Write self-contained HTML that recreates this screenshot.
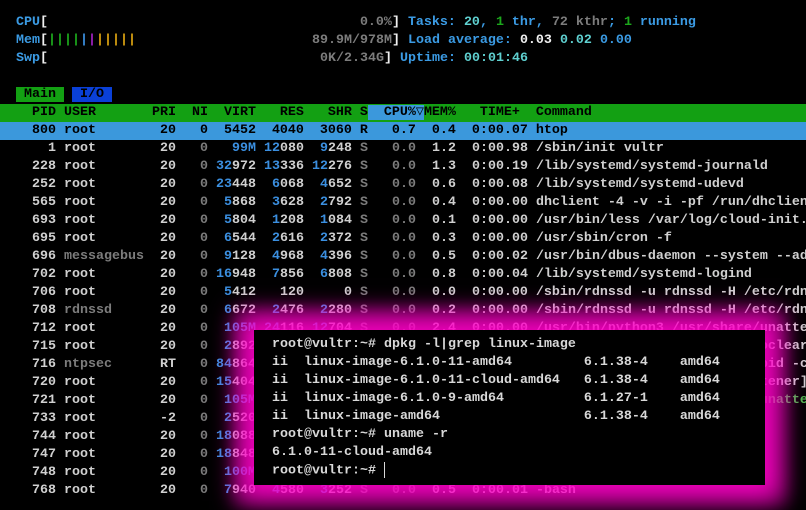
<!DOCTYPE html>
<html><head><meta charset="utf-8"><style>
html,body{margin:0;padding:0;background:#000;width:806px;height:510px;overflow:hidden}
#s{position:absolute;left:0;top:14px;width:806px;font-family:"Liberation Mono",monospace;font-size:13.33px;font-weight:bold;color:#d0d0d0}
.l{height:18px;line-height:18px;white-space:pre;overflow:hidden}
.g{color:#7c7c7c}.b{color:#3b8fe0}.lb{color:#3b9be4}.w{color:#f0f0f0}.cy{color:#5fd0d0}.gr{color:#1ca81c}.gg{color:#4fb84f}
.hd{background:#13a013;color:#000}.sel{background:#3b98dc;color:#000}
.cs{background:#3b98dc}
.tm{background:#13a013;color:#000}.tio{background:#0a40d8;color:#000}
.o{color:#d8a010}.m{color:#a020c0}
#t{position:absolute;left:254px;top:330px;width:511px;height:155px;background:#000;box-shadow:0 0 24px 16px rgba(255,0,200,0.92);font-family:"Liberation Mono",monospace;font-size:13.33px;font-weight:bold;color:#d8d8d8;padding:6px 0 0 18px;box-sizing:border-box}
#glow{position:absolute;left:234px;top:310px;width:551px;height:195px;background:rgba(255,0,200,0.28);filter:blur(8px)}
.cur{display:inline-block;width:1px;height:16px;background:#d8d8d8;vertical-align:middle}
</style></head><body>
<div id="s">
<div class="l">  <span class="lb">CPU</span><span class="w">[</span>                                       <span class="g">0.0%</span><span class="w">]</span> <span class="lb">Tasks: </span><span class="cy">20</span><span class="lb">, </span><span class="gr">1</span><span class="lb"> thr, </span><span class="g">72 kthr</span><span class="lb">; </span><span class="gr">1</span><span class="lb"> running</span></div>
<div class="l">  <span class="lb">Mem</span><span class="w">[</span><span class="gr">||||</span><span class="b">|</span><span class="m">|</span><span class="o">|||||</span>                      <span class="g">89.9M/978M</span><span class="w">]</span> <span class="lb">Load average: </span><span class="w">0.03 </span><span class="cy">0.02 </span><span class="lb">0.00</span></div>
<div class="l">  <span class="lb">Swp</span><span class="w">[</span>                                  <span class="g">0K/2.34G</span><span class="w">]</span> <span class="lb">Uptime: </span><span class="cy">00:01:46</span></div>
<div class="l"> </div>
<div class="l">  <span class="tm"> Main </span> <span class="tio"> I/O </span></div>
<div class="l hd">    PID USER       PRI  NI  VIRT   RES   SHR S<span class="cs">  CPU%▽</span>MEM%   TIME+  Command                                          </div>
<div class="l sel">    800 root        20   0  5452  4040  3060 R   0.7  0.4  0:00.07 htop                                              </div>
<div class="l">      1 root        20 <span class="g">  0</span>   <span class="b">99M</span> <span class="b">12</span>080  <span class="b">9</span>248 <span class="g">S   0.0</span>  1.2  0:00.98 /sbin/init vultr</div>
<div class="l">    228 root        20 <span class="g">  0</span> <span class="b">32</span>972 <span class="b">13</span>336 <span class="b">12</span>276 <span class="g">S   0.0</span>  1.3  0:00.19 /lib/systemd/systemd-journald</div>
<div class="l">    252 root        20 <span class="g">  0</span> <span class="b">23</span>448  <span class="b">6</span>068  <span class="b">4</span>652 <span class="g">S   0.0</span>  0.6  0:00.08 /lib/systemd/systemd-udevd</div>
<div class="l">    565 root        20 <span class="g">  0</span>  <span class="b">5</span>868  <span class="b">3</span>628  <span class="b">2</span>792 <span class="g">S   0.0</span>  0.4  0:00.00 dhclient -4 -v -i -pf /run/dhclient</div>
<div class="l">    693 root        20 <span class="g">  0</span>  <span class="b">5</span>804  <span class="b">1</span>208  <span class="b">1</span>084 <span class="g">S   0.0</span>  0.1  0:00.00 /usr/bin/less /var/log/cloud-init.</div>
<div class="l">    695 root        20 <span class="g">  0</span>  <span class="b">6</span>544  <span class="b">2</span>616  <span class="b">2</span>372 <span class="g">S   0.0</span>  0.3  0:00.00 /usr/sbin/cron -f</div>
<div class="l">    696 <span class="g">messagebus</span>  20 <span class="g">  0</span>  <span class="b">9</span>128  <span class="b">4</span>968  <span class="b">4</span>396 <span class="g">S   0.0</span>  0.5  0:00.02 /usr/bin/dbus-daemon --system --ad</div>
<div class="l">    702 root        20 <span class="g">  0</span> <span class="b">16</span>948  <span class="b">7</span>856  <span class="b">6</span>808 <span class="g">S   0.0</span>  0.8  0:00.04 /lib/systemd/systemd-logind</div>
<div class="l">    706 root        20 <span class="g">  0</span>  <span class="b">5</span>412   120     0 <span class="g">S   0.0</span>  0.0  0:00.00 /sbin/rdnssd -u rdnssd -H /etc/rdn</div>
<div class="l">    708 <span class="g">rdnssd</span>      20 <span class="g">  0</span>  <span class="b">6</span>672  <span class="b">2</span>476  <span class="b">2</span>280 <span class="g">S   0.0</span>  0.2  0:00.00 /sbin/rdnssd -u rdnssd -H /etc/rdn</div>
<div class="l">    712 root        20 <span class="g">  0</span>  <span class="b">105M</span> <span class="b">24</span>116 <span class="b">12</span>704 <span class="g">S   0.0</span>  2.4  0:00.00 /usr/bin/python3 /usr/share/unatte</div>
<div class="l">    715 root        20 <span class="g">  0</span>  <span class="b">2</span>892  <span class="b">1</span>020   936 <span class="g">S   0.0</span>  0.1  0:00.00 /sbin/agetty -o -p -- \u --noclear</div>
<div class="l">    716 <span class="g">ntpsec</span>      RT <span class="g">  0</span> <span class="b">84</span>864  <span class="b">5</span>200  <span class="b">4</span>480 <span class="g">S   0.0</span>  0.5  0:00.01 /usr/sbin/ntpd -p /run/ntpd.pid -c</div>
<div class="l">    720 root        20 <span class="g">  0</span> <span class="b">15</span>404  <span class="b">9</span>220  <span class="b">7</span>960 <span class="g">S   0.0</span>  0.9  0:00.00 sshd: /usr/sbin/sshd -D [listener]</div>
<div class="l">    721 root        20 <span class="g">  0</span>  <span class="b">105M</span> <span class="b">24</span>116 <span class="b">12</span>704 <span class="g">S   0.0</span>  2.4  0:00.00 <span class="gg">/usr/bin/python3 /usr/share/unatte</span></div>
<div class="l">    733 root        -2 <span class="g">  0</span>  <span class="b">2</span>520  <span class="b">1</span>400  <span class="b">1</span>180 <span class="g">S   0.0</span>  0.1  0:00.00 /usr/sbin/watchdog</div>
<div class="l">    744 root        20 <span class="g">  0</span> <span class="b">18</span>088 <span class="b">10</span>900  <span class="b">9</span>100 <span class="g">S   0.0</span>  1.1  0:00.02 sshd: root@pts/0</div>
<div class="l">    747 root        20 <span class="g">  0</span> <span class="b">18</span>848 <span class="b">10</span>412  <span class="b">8</span>940 <span class="g">S   0.0</span>  1.0  0:00.01 /lib/systemd/systemd --user</div>
<div class="l">    748 root        20 <span class="g">  0</span>  <span class="b">100M</span>  <span class="b">3</span>420     0 <span class="g">S   0.0</span>  0.3  0:00.00 (sd-pam)</div>
<div class="l">    768 root        20 <span class="g">  0</span>  <span class="b">7</span>940  <span class="b">4</span>580  <span class="b">3</span>252 <span class="g">S   0.0</span>  0.5  0:00.01 -bash</div>
</div>
<div id="glow"></div>
<div id="t">
<div class="l">root@vultr:~# dpkg -l|grep linux-image</div>
<div class="l">ii  linux-image-6.1.0-11-amd64         6.1.38-4    amd64</div>
<div class="l">ii  linux-image-6.1.0-11-cloud-amd64   6.1.38-4    amd64</div>
<div class="l">ii  linux-image-6.1.0-9-amd64          6.1.27-1    amd64</div>
<div class="l">ii  linux-image-amd64                  6.1.38-4    amd64</div>
<div class="l">root@vultr:~# uname -r</div>
<div class="l">6.1.0-11-cloud-amd64</div>
<div class="l">root@vultr:~# <span class="cur"></span></div>
</div>
</body></html>
